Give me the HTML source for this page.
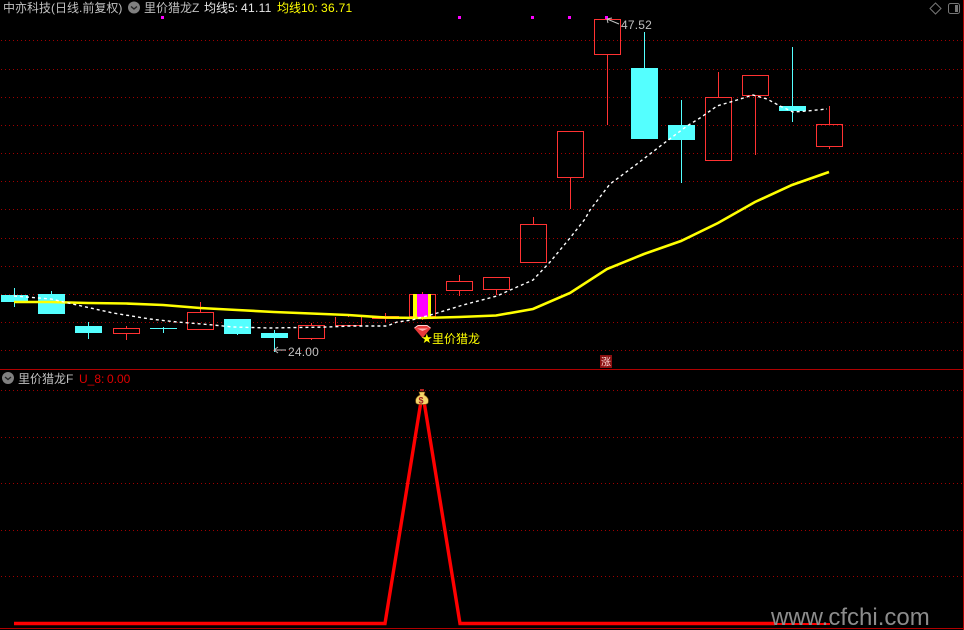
<!DOCTYPE html>
<html><head><meta charset="utf-8"><style>
html,body{margin:0;padding:0;background:#000;width:964px;height:630px;overflow:hidden}
svg{display:block}
text{font-family:"Liberation Sans","WenQuanYi Zen Hei",sans-serif;font-size:12px}
.c{font-family:"WenQuanYi Zen Hei","Liberation Sans",sans-serif}
</style></head><body>
<svg width="964" height="630" viewBox="0 0 964 630" xmlns="http://www.w3.org/2000/svg">
<rect width="964" height="630" fill="#000"/>
<g stroke="#a00000" stroke-width="1" stroke-dasharray="1 3" shape-rendering="crispEdges">
<path d="M1 40.5H963M1 69.5H963M1 97.5H963M1 125.5H963M1 153.5H963M1 181.5H963M1 209.5H963M1 238.5H963M1 266.5H963M1 294.5H963M1 322.5H963M1 350.5H963"/>
<path d="M1 390.5H963M1 437.5H963M1 483.5H963M1 530.5H963M1 576.5H963"/>
</g>
<g stroke="#b00000" stroke-width="1" shape-rendering="crispEdges" fill="none">
<path d="M0 369.5H964M0 628.5H964"/>
</g>
<path d="M963.5 0V630" stroke="#b00000" shape-rendering="crispEdges"/>

<g shape-rendering="crispEdges">
<!-- cyan -->
<g stroke="#54ffff" stroke-width="1" fill="none">
<path d="M14.5 288V307M51.5 291V294M88.5 322V339M163.5 327V333M237.5 334V335M274.5 330V352M644.5 32V68M681.5 100V183M792.5 47V122"/>
</g>
<g fill="#54ffff">
<rect x="1" y="295" width="27" height="7"/>
<rect x="38" y="294" width="27" height="20"/>
<rect x="75" y="326" width="27" height="7"/>
<rect x="150" y="328" width="27" height="1"/>
<rect x="224" y="319" width="27" height="15"/>
<rect x="261" y="333" width="27" height="5"/>
<rect x="631" y="68" width="27" height="71"/>
<rect x="668" y="125" width="27" height="15"/>
<rect x="779" y="106" width="27" height="5"/>
</g>
<!-- red -->
<g stroke="#ff3232" stroke-width="1" fill="none">
<path d="M126.5 326V328M126.5 334V340M200.5 302V312M311.5 323V325M311.5 339V340M348.5 315V317M385.5 313V316M385.5 319V322M422.5 292V294M422.5 317V320M459.5 275V281M459.5 291V296M496.5 290V295M533.5 217V224M570.5 178V209M607.5 55V125M718.5 72V97M755.5 96V155M829.5 106V124M829.5 147V149"/>
<rect x="113.5" y="328.5" width="26" height="5"/>
<rect x="187.5" y="312.5" width="26" height="17"/>
<rect x="298.5" y="325.5" width="26" height="13"/>
<path d="M335.5 317V325.5H361.5V317"/>
<rect x="372.5" y="316.5" width="26" height="2"/>
<rect x="409.5" y="294.5" width="26" height="22"/>
<rect x="446.5" y="281.5" width="26" height="9"/>
<rect x="483.5" y="277.5" width="26" height="12"/>
<rect x="520.5" y="224.5" width="26" height="38"/>
<rect x="557.5" y="131.5" width="26" height="46"/>
<rect x="594.5" y="19.5" width="26" height="35"/>
<rect x="705.5" y="97.5" width="26" height="63"/>
<rect x="742.5" y="75.5" width="26" height="20"/>
<rect x="816.5" y="124.5" width="26" height="22"/>
</g>
<rect x="413" y="294" width="18" height="23" fill="#ffff00"/>
<rect x="417" y="294" width="11" height="23" fill="#ff00ff"/>
<!-- magenta dots -->
<g fill="#ff00ff">
<rect x="161" y="16" width="3" height="3"/>
<rect x="458" y="16" width="3" height="3"/>
<rect x="531" y="16" width="3" height="3"/>
<rect x="568" y="16" width="3" height="3"/>
<rect x="605" y="16" width="3" height="3"/>
</g>
</g>

<!-- yellow MA10 -->
<polyline fill="none" stroke="#ffff00" stroke-width="2.6" points="14,302 51,302 88,303 126,303.5 163,305 200,308 237,310 274,312 311,313.5 348,315 385,317.5 422,318 459,317 496,315.5 533,309 570,293 607,269 644,254 681,241 718,223 755,202 792,185 829,172"/>
<!-- white MA5 -->
<polyline fill="none" stroke="#fff" stroke-width="1.4" stroke-dasharray="3 3" points="14,296 51,299 77,305 113,313 150,319 177,322 213,325 233,327 270,328 327,327 350,326 387,326 397,322 412,320 434,314 463,305 497,296 508,291 533,280 550,262 570,238 585,219 590,210 600,197 610,184 633,167 663,144 687,126 700,118 717,106 737,100 753,95 767,99 780,106 793,112 807,111 827,109"/>

<!-- annotations -->
<g stroke="#c0c0c0" stroke-width="1" fill="none">
<path d="M274 350H286M274 350L278 347M274 350L278 353"/>
<path d="M607 19L619 24M607 19L612 18M607 19L608 23"/>
</g>
<text x="288" y="356" fill="#c0c0c0" style="letter-spacing:.2px">24.00</text>
<text x="621" y="29" fill="#c0c0c0" style="letter-spacing:.2px">47.52</text>

<!-- gem -->
<path d="M414 328L418 325H427L431 328L422.5 338Z" fill="#e83a3a"/>
<path d="M417 328.5H428L422.5 331Z" fill="#ffb0b0"/>
<path d="M414.5 328L418 325.5H427L430.5 328" fill="none" stroke="#ffd0d0" stroke-width="1"/>
<text x="421" y="343" fill="#ffff00" style="font-size:13px">★</text>
<text x="432" y="343" class="c" fill="#ffff00" style="font-size:12px">里价猎龙</text>

<!-- 涨 -->
<rect x="600" y="355" width="12" height="13" fill="#8a1010"/>
<text x="601" y="365.5" class="c" fill="#ffd8d8" style="font-size:10px">涨</text>

<!-- header top -->
<text x="3" y="12" class="c" fill="#c0c0c0">中亦科技(日线.前复权)</text>
<circle cx="134" cy="7.5" r="6" fill="#808080"/>
<path d="M131 6.5L134 9L137 6.5" stroke="#222" stroke-width="1.3" fill="none"/>
<text x="144" y="12" class="c" fill="#c0c0c0">里价猎龙Z</text>
<text x="204" y="12" class="c" fill="#e8e8e8">均线5:</text>
<text x="241" y="12" fill="#e8e8e8" style="letter-spacing:.3px">41.11</text>
<text x="277" y="12" class="c" fill="#ffff00">均线10:</text>
<text x="321" y="12" fill="#ffff00" style="letter-spacing:.3px">36.71</text>

<!-- top right icons -->
<path d="M935.5 3L941 8.5L935.5 14L930 8.5Z" fill="none" stroke="#777" stroke-width="1"/>
<rect x="948.5" y="3.5" width="11" height="10" rx="2" fill="none" stroke="#777" stroke-width="1"/>
<rect x="955" y="5" width="3" height="7" fill="#777"/>

<!-- lower header -->
<circle cx="8" cy="378" r="6" fill="#808080"/>
<path d="M5 377L8 379.5L11 377" stroke="#222" stroke-width="1.3" fill="none"/>
<text x="18" y="383" class="c" fill="#c0c0c0">里价猎龙F</text>
<text x="79" y="383" fill="#e00000">U_8:</text>
<text x="107" y="383" fill="#e00000">0.00</text>

<!-- lower red line -->
<polyline fill="none" stroke="#ff0000" stroke-width="3.4" stroke-linejoin="miter" points="14,623.5 385,623.5 422.5,392 460,623.5 775,623.5"/>
<path d="M775 624H830" stroke="#ff0000" stroke-width="2"/>

<!-- money bag -->
<path d="M419 392H425L424 395C428 397 429 400 428 403C427 405 417 405 416 403C415 400 416 397 420 395Z" fill="#f5d66a" stroke="#8a5a10" stroke-width=".6"/>
<rect x="420" y="389" width="4" height="2" fill="#b02020"/>
<text x="418.5" y="403.5" fill="#a02020" style="font-size:9px;font-weight:bold">$</text>

<!-- watermark -->
<text x="771" y="625" fill="#8c8c8c" style="font-size:24px">www.cfchi.com</text>
</svg>
</body></html>
